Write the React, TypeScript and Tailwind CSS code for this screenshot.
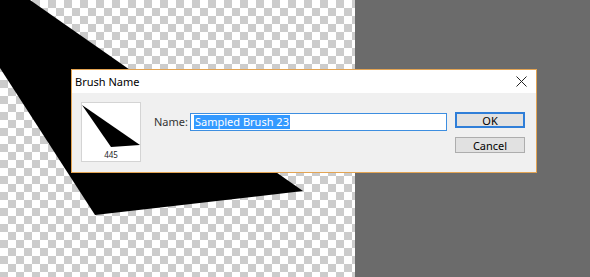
import React from "react";

function Canvas() {
  return (
    <svg width="355" height="277" viewBox="0 0 355 277" className="block">
      <defs>
        <pattern id="chk" width="16" height="16" patternUnits="userSpaceOnUse">
          <rect width="16" height="16" fill="#ffffff" />
          <rect x="0" y="0" width="8" height="8" fill="#cccccc" />
          <rect x="8" y="8" width="8" height="8" fill="#cccccc" />
        </pattern>
      </defs>
      <rect width="355" height="277" fill="url(#chk)" />
      <polygon points="0,0 30,0 303,191 95,215 0,68" fill="#000000" />
    </svg>
  );
}

function BrushPreview() {
  return (
    <div className="relative w-[60px] h-[60px] bg-white border border-[#d4d4d4] flex flex-col items-center">
      <svg width="58" height="58" viewBox="0 0 58 58" className="absolute left-0 top-0">
        <polygon points="0,2 58,42 29,44" fill="#000" />
      </svg>
      <div className="mt-auto mb-[1px] text-[8px] leading-[10px] text-[#222] relative">445</div>
    </div>
  );
}

export default function App() {
  const font = { fontFamily: '"Noto Sans", "Liberation Sans", sans-serif' };
  return (
    <div className="relative w-[590px] h-[277px] overflow-hidden flex" style={font}>
      <div className="w-[355px] h-[277px]">
        <Canvas />
      </div>
      <div className="flex-1 bg-[#6b6b6b]" />

      <div className="absolute left-[71px] top-[69px] w-[466px] h-[104px] border border-[#e3a453] bg-[#f0f0f0] flex flex-col">
        <div className="h-[23px] bg-white flex items-center justify-between pl-[3px] pr-[9px]">
          <span className="text-[11px] leading-none text-black">Brush Name</span>
          <svg width="11" height="11" viewBox="0 0 11 11">
            <path d="M0.5 0.5 L10.5 10.5 M10.5 0.5 L0.5 10.5" stroke="#222" strokeWidth="1" />
          </svg>
        </div>
        <div className="flex items-start pl-[9px] pt-[9px]">
          <BrushPreview />
          <div className="flex items-center mt-[11px] ml-[13px]">
            <span className="text-[11px] text-[#333] w-[36px]">Name:</span>
            <div className="w-[257px] h-[18px] bg-white border border-[#3d8ee0] flex items-center pl-[3px]">
              <span className="bg-[#3399ff] text-white text-[11px] leading-[14px] px-[1px]">Sampled Brush 23</span>
            </div>
          </div>
          <div className="flex flex-col ml-[8px] mt-[10px] gap-[9px]">
            <button className="w-[70px] h-[16px] bg-[#e1e1e1] border-2 border-[#2f7ed8] text-[11px] leading-none text-black flex items-center justify-center">
              OK
            </button>
            <button className="w-[70px] h-[16px] bg-[#e1e1e1] border border-[#adadad] text-[11px] leading-none text-black flex items-center justify-center">
              Cancel
            </button>
          </div>
        </div>
      </div>
    </div>
  );
}
